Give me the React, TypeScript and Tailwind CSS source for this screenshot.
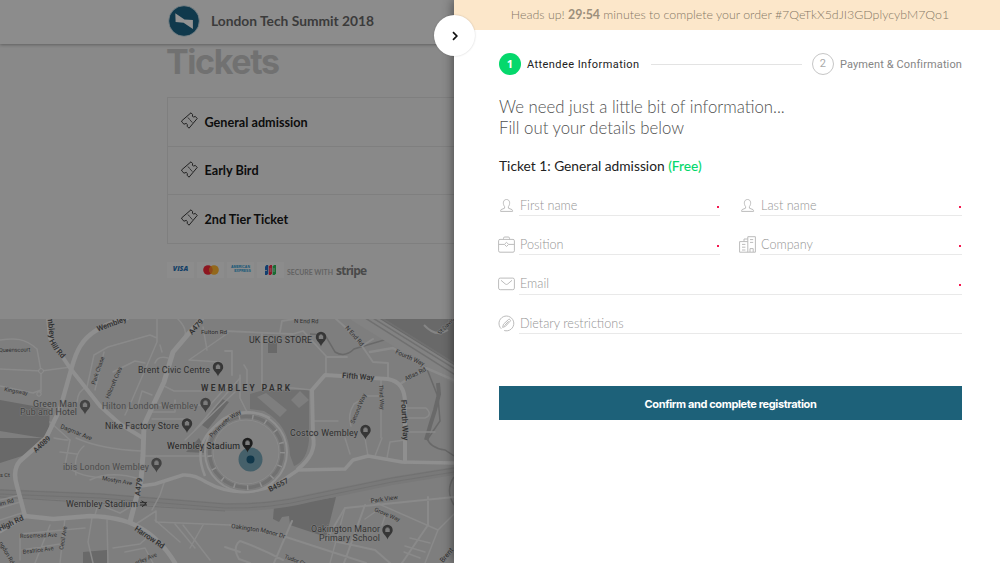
import React from "react";

type P = { d: string; w?: number; c?: string };

const roads: P[] = [
  { d: "M0 340 C15 338 25 338 37 349 L41 371 V392 M0 369 L41 371 L71 367 M0 386 L33 393 L41 390", w: 1.5 },
  { d: "M70 440 L50 422 M77 402 Q78 390 87 387 L94 355 L108 347 L150 335 L157 338 M157 318 V342 L145 370 L132 400 L125 415", w: 1.5 },
  { d: "M113 372 L135 361 L145 363 M104 352 L95 390 M138 405 L142 391 L152 395 M155 363 Q158 355 168 358 M162 352 L160 345", w: 1.5 },
  { d: "M162 385 L174 391 H210 M189 360 L218 340 L228 333 M203 327 L207 350 M177 318 Q187 328 185 335 M189 360 L220 362", w: 1.5 },
  { d: "M157 405 H210 L228 385 M152 419 H190 M175 400 V412 H150 M195 430 L240 378 M185 440 L235 392", w: 1.5 },
  { d: "M280 332 L282 321 L300 318 M225 331 L293 334 L303 331 L326 356 V374 M326 357 H347 M262 334 V388 M225 351 H232 V375", w: 1.8 },
  { d: "M335 318 L345 327 L362 346 L373 362 L388 363 V379 M345 318 L364 318 M362 346 L373 339", w: 2 },
  { d: "M370 352 L393 348 L426 368 L400 384 M426 368 L454 380", w: 2.5 },
  { d: "M381 380 V438 M351 426 Q347 415 354 404 L367 396 H382 M405 408 H426 Q433 415 425 418 L405 418 M405 432 H435 M312 421 H338", w: 1.5 },
  { d: "M240 375 V398 L246 410 L248 413 M244 365 L247 370 V390 M262 388 L293 388 L312 390", w: 1.5 },
  { d: "M345 438 L350 454 M375 456 L382 438 M387 458 L390 442 L405 440 M365 438 L368 456 M405 440 V461", w: 1.5 },
  { d: "M54 438 Q64 440 68 440 M60 452 L77 454 M70 440 L65 465 Q80 479 115 478 M76 438 Q100 449 141 451 M84 446 Q73 455 76 475", w: 1.5 },
  { d: "M143 456 H207 M97 508 L95 515 M105 507 L120 513 L135 504 M152 510 L160 495 L165 480 M90 480 Q110 470 140 479", w: 1.5 },
  { d: "M92 518 L88 542 L93 563 M107 520 L108 563 M65 518 L60 563 M20 534 L85 528 M20 535 V560 M35 563 L50 525 M22 550 L60 544 M113 548 L140 544 L150 535 M136 524 L156 511 V522 L230 525", w: 1.5 },
  { d: "M125 552 L145 548 L153 563 M175 524 L195 548 M183 525 L210 560 M203 525 L190 548 M155 520 L180 542 M0 520 L25 512 M0 500 L20 495 M0 508 L20 502", w: 1.5 },
  { d: "M230 525 L286 537 L366 563 M292 521 L274 563 M326 540 L345 508 L454 497 M428 497 V525 L402 563 M365 505 L344 563 M320 538 L375 550 L390 563 M225 547 L240 552 M283 560 Q260 548 240 541 Q232 547 239 559 L250 563", w: 2 },
  { d: "M345 508 L330 563 M370 500 L438 530 L425 563 M375 512 L365 519 M385 516 L382 525 M438 530 L454 514 M410 538 L430 543 M405 546 L425 552 M404 552 L420 558", w: 1.5 },
];

const majors: P[] = [
  { d: "M48 318 L50 338 L70 368 L100 406 L120 424 L143 438", w: 4 },
  { d: "M127 318 Q92 327 81 345 Q76 352 71 370 L60 409 L46 438 L20 461 Q12 470 17 486 L25 516 L0 531", w: 4.5 },
  { d: "M25 516 L53 519 L90 516 Q120 517 137 526 Q160 538 175 563", w: 4.5 },
  { d: "M202 318 L173 352 L164 382 L144 425 L143 455 L141 480 L130 522", w: 5 },
  { d: "M141 486 L155 484 L183 475 Q194 474 206 482 Q240 501 279 483 L298 470 L345 469 L353 460 L368 456 L402 462 L454 463", w: 3.5 },
  { d: "M298 469 Q317 454 313 436 L312 390 L325 375 L388 379 Q405 382 405 403 V462", w: 4 },
];

function Pin({ x, y, c = "#363636" }: { x: number; y: number; c?: string }) {
  return (
    <g transform={`translate(${x} ${y})`}>
      <path d="M0 8.5 C-1 4.5 -5.2 3 -5.2 -1 A5.2 5.2 0 0 1 5.2 -1 C5.2 3 1 4.5 0 8.5Z" fill={c} />
      <path d="M-2.2 -2.5 H2.2 V1 H-2.2Z M-1.2 -3.6 H1.2 V-2.5 H-1.2Z" fill="#7c7c7c" />
    </g>
  );
}

function T({ x, y, r = 0, s = 7, w = 400, c = "#2e2e2e", a = "start", len, children }: {
  x: number; y: number; r?: number; s?: number; w?: number; c?: string; a?: "start" | "end" | "middle"; len?: number; children: string;
}) {
  return (
    <text transform={`translate(${x} ${y}) rotate(${r})`} fontSize={s} fontWeight={w} fill={c} textAnchor={a}
      textLength={len} stroke="#808080" strokeWidth="1.2" paintOrder="stroke" strokeLinejoin="round">
      {children}
    </text>
  );
}

function CityMap() {
  return (
    <svg width="454" height="245" viewBox="0 318 454 245" className="block font-['Roboto',sans-serif]">
      <rect y="318" width="454" height="245" fill="#7e7e7e" />
      <g fill="#696969">
        <path d="M0 400 L50 409 L49 428 L43 438 L0 431Z M0 438 H42 L25 455 L0 463Z" />
        <path d="M274 507 L336 497 L326 537 L290 525 L289 516 L282 517 L279 522 L273 519Z M83 552 L107 550 V563 H83Z" />
        <path d="M364 318 H454 V376Z M268 343 H277 V353 H268Z" />
        <path d="M250 394 L264 390 H309 V440 Q307 461 294 466 L290 455 Q289 425 264 411 L250 409Z" fill="#707070" />
        <path d="M186 452 L199 438 L207 453Z M202 425 L222 399 L229 402 L208 429Z" />
      </g>
      <g fill="#7e7e7e">
        <path d="M257 397 L266 393 L287 410 L280 417Z M291 400 L300 391 L309 400 L299 408Z" />
      </g>
      <g fill="none" stroke="#696969" strokeWidth="1.5">
        <path d="M310 334 L325 335 L335 352 Q345 358 354 349 L394 337 L418 350 L427 369 L438 397 L440 421 L427 440" />
        <path d="M454 477 Q445 490 454 505 M427 438 Q430 448 445 450 L454 456" />
        <path d="M438 383 L439 394 L435 410 L430 426 L426 440" strokeWidth="4" />
      </g>
      <g fill="none" strokeLinecap="butt">
        <path d="M355 313 L460 378" stroke="#828282" strokeWidth="16" />
        <path d="M368 315 L460 372 M362 316 L460 378 M377 315 L460 367" stroke="#707070" strokeWidth="1.5" />
        <path d="M424 325 Q436 338 448 330" stroke="#858585" strokeWidth="2" />
        <path d="M0 493 L100 497 L225 507 Q270 508 310 498 L392 481 L454 471" stroke="#797979" strokeWidth="8" />
        <path d="M0 490 L100 494 L225 504 Q270 505 310 495 L392 478 L454 468 M0 494 L100 498 L225 508 Q270 509 310 499 L392 482 L454 472 M0 497 L225 511" stroke="#707070" strokeWidth="0.9" />
      </g>
      <g fill="none" stroke="#8a8a8a" strokeLinecap="round" strokeLinejoin="round">
        {roads.map((r, i) => <path key={i} d={r.d} strokeWidth={r.w} />)}
      </g>
      <g fill="none" stroke="#8f8f8f" strokeLinecap="round" strokeLinejoin="round">
        {majors.map((r, i) => <path key={i} d={r.d} strokeWidth={r.w} />)}
      </g>
      <ellipse cx="246" cy="452" rx="41" ry="40" fill="#7e7e7e" stroke="#8f8f8f" strokeWidth="2" />
      <ellipse cx="246" cy="452" rx="36.5" ry="35.5" fill="none" stroke="#717171" strokeWidth="3.5" />
      <ellipse cx="246" cy="452" rx="36.5" ry="35.5" fill="none" stroke="#8f8f8f" strokeWidth="5" strokeDasharray="1.5 12" />
      <ellipse cx="246" cy="452" rx="33" ry="32" fill="#828282" stroke="#8b8b8b" strokeWidth="1" />
      <path d="M205 476 Q190 440 224 420 Q247 406 270 418" fill="none" stroke="#8f8f8f" strokeWidth="2.5" />
      <circle cx="41" cy="371" r="2.4" fill="#7e7e7e" stroke="#8f8f8f" />
      <circle cx="39" cy="394" r="2.2" fill="#7e7e7e" stroke="#8f8f8f" />

      <T x={47.5} y={317} r={84} s={8} w={500}>mbley</T>
      <T x={49} y={341} r={60} s={7.5} w={500}>Hill</T>
      <T x={56} y={352} r={48} s={7.5} w={500}>Rd</T>
      <T x={98} y={331.5} r={-20} s={7.5} w={500}>Wembley</T>
      <T x={192} y={335} r={-48} s={7.5} w={500}>A479</T>
      <T x={201} y={334} s={6.2}>Fulton Rd</T>
      <T x={-1} y={352} s={5.5} r={-1}>Queenscourt</T>
      <T x={4} y={391} r={10} s={5.6}>Kingsway</T>
      <T x={95} y={385} r={-71} s={5.8}>Park Chase</T>
      <T x={109} y={399} r={-67} s={5.8}>Hillcroft Cres</T>
      <T x={60} y={428} r={22} s={6.2}>Dagmar Ave</T>
      <T x={212} y={438} r={-45} s={6.2}>Perimet</T>
      <T x={226} y={423} r={-33} s={6.2}>er Way</T>
      <T x={294} y={323} s={6} r={1}>N End Rd</T>
      <T x={345} y={328} r={49} s={6}>N End Rd</T>
      <T x={395} y={353} r={25} s={6.2}>Fourth Way</T>
      <T x={406} y={381} r={-27} s={6.2}>Atlas Rd</T>
      <T x={440} y={335} r={-46} s={5.8}>St Davids</T>
      <T x={342} y={378} r={4} s={7.7} w={500}>Fifth Way</T>
      <T x={401} y={400} r={87} s={8} w={500}>Fourth Way</T>
      <T x={379} y={385} r={87} s={5.6}>Third Way</T>
      <T x={354} y={424} r={-67} s={5.8}>Second Way</T>

      <T x={249} y={343} s={8.8} len={63}>UK ECIG STORE</T>
      <T x={138} y={373} s={8.8} len={72}>Brent Civic Centre</T>
      <T x={201} y={391.3} s={8.4} w={600} len={89}>WEMBLEY PARK</T>
      <T x={77} y={406.5} s={8.8} c="#404040" a="end" len={44}>Green Man</T>
      <T x={77} y={415} s={8.8} c="#404040" a="end" len={57}>Pub and Hotel</T>
      <T x={102} y={408.5} s={8.8} c="#4c4c4c" len={96}>Hilton London Wembley</T>
      <T x={105} y={429} s={8.8} len={74}>Nike Factory Store</T>
      <T x={290} y={435.5} s={8.8} len={68}>Costco Wembley</T>
      <T x={167} y={449.3} s={8.8} len={73} c="#1e1e1e">Wembley Stadium</T>
      <T x={63} y={469.5} s={8.8} c="#4c4c4c" len={86}>ibis London Wembley</T>
      <T x={66} y={506.5} s={8.8} len={72}>Wembley Stadium</T>
      <T x={380} y={531.5} s={8.8} c="#363636" a="end" len={69}>Oakington Manor</T>
      <T x={380} y={540.5} s={8.8} c="#363636" a="end" len={61}>Primary School</T>

      <T x={36} y={453} r={-43} s={7} w={500}>A4089</T>
      <T x={0} y={477} s={5.6}>s Ct</T>
      <T x={102} y={480} r={10} s={5.8}>Mostyn Ave</T>
      <T x={140} y={496} r={-83} s={7.5} w={500}>A479</T>
      <T x={0} y={506} r={-15} s={5.8}>lm Rd</T>
      <T x={0} y={531} r={-25} s={7.5} w={500}>High Rd</T>
      <T x={20} y={538} r={-2} s={5.8} len={37}>Rosemead Ave</T>
      <T x={23} y={554} r={-7} s={5.8} len={31}>Beatrice Ave</T>
      <T x={63} y={550} r={-80} s={5.8}>Cecil Ave</T>
      <T x={-1} y={543} r={60} s={5.8}>ngdon Rd</T>
      <T x={134} y={530} r={34} s={7.7} w={500} len={34}>Harrow Rd</T>
      <T x={136} y={565} r={-23} s={5.8}>erley Ave</T>
      <T x={270} y={492} r={-27} s={7.3} w={500}>B4557</T>
      <T x={371} y={503} r={-8} s={6.2}>Park View</T>
      <T x={374} y={511} r={23} s={5.8}>Grove Way</T>
      <T x={231} y={528} r={8} s={6.2}>Oakington</T>
      <T x={260} y={531.5} r={16} s={6.2}>Manor Dr</T>
      <T x={284} y={558} r={21} s={5.8}>Tudor Ct</T>
      <T x={443} y={563} r={-50} s={7}>Brent</T>

      <Pin x={321} y={338} />
      <Pin x={218} y={368} />
      <Pin x={85} y={406} c="#424242" />
      <Pin x={205.5} y={404} c="#424242" />
      <Pin x={187} y={424.5} />
      <Pin x={365.5} y={431} />
      <Pin x={156.5} y={464} c="#424242" />
      <Pin x={387.5} y={531} />
      <path d="M140 502.7 H147 M140 505 H147 M141.5 500.8 L146 503.8 L142 506.8" stroke="#2b2b2b" fill="none" strokeWidth="1" />
      <circle cx="250.5" cy="459.5" r="12" fill="#45606a" />
      <circle cx="250.5" cy="459.5" r="4" fill="#10374a" />
      <Pin x={247.5} y={444} c="#1e1e1e" />
      <rect y="318" width="454" height="1" fill="#898989" />
    </svg>
  );
}

function TicketIcon() {
  return (
    <svg width="17" height="17" viewBox="0 0 17 17" className="shrink-0" fill="none" stroke="#1c1c1c" strokeWidth="0.95" strokeLinejoin="round" strokeLinecap="round">
      <path d="M1 8.6 L10 0.8 L11.6 2.6 Q10.9 4.4 12.4 5.1 L14.3 4.4 L16.2 6.5 L8 16.2 L6.2 14.3 Q7 12.2 5.2 11.4 L3 12.2 L1 10.2Z" />
      <path d="M7.3 5.9 L7.9 6.6 M8.8 7.7 L9.5 8.5 M10.4 9.5 L11 10.2" />
    </svg>
  );
}

const iconPaths: Record<string, React.ReactNode> = {
  user: <path d="M6.6 9.6 C4.8 7.5 4.6 2.5 8.5 2.5 S12.2 7.5 10.4 9.6 V11.2 L14 12.6 Q14.6 13 14.6 14.4 H2.6 Q2.6 13 3.1 12.6 L6.6 11.2Z" />,
  bag: (
    <>
      <rect x="0.6" y="3.4" width="15.8" height="12.8" rx="1.4" />
      <path d="M5.5 3.4 V2.3 Q5.5 1 6.8 1 H10.2 Q11.5 1 11.5 2.3 V3.4 M0.6 8.4 H6.2 M10.8 8.4 H16.4 M8.5 6.3 L10.6 8.4 L8.5 10.5 L6.4 8.4Z" />
    </>
  ),
  mail: (
    <>
      <rect x="0.6" y="2.1" width="15.8" height="11.6" rx="1.6" />
      <path d="M3 4.3 L7.3 8 Q8.5 8.9 9.7 8 L14 4.3" />
    </>
  ),
  pencil: (
    <>
      <path d="M3.3 13.8 A7.4 7.4 0 1 1 6.2 15.5" />
      <path d="M4.6 12.4 L5.5 9.2 L10.6 4.4 Q11.3 3.9 12 4.6 Q12.9 5.4 12.2 6.2 L7.4 11.4Z M6.5 10.6 L10.7 6.2" />
    </>
  ),
  building: (
    <path d="M8.8 16.2 V0.7 H16.4 V16.2 H0.6 V5.6 H8.8 M5 5.6 V3 H8.8 M3 8.4 H6.4 M3 11.2 H6.4 M11 3.6 H14.2 M11 6.4 H14.2 M11 16 V12.6 H14.2 V16 M3 14 H6.4" />
  ),
};

function Field({ icon, label, required = true, wide = false }: { icon: string; label: string; required?: boolean; wide?: boolean }) {
  return (
    <label className={wide ? "col-span-2 flex h-[39.3px] items-start" : "flex h-[39.3px] items-start"}>
      <svg width="17" height="17" viewBox="0 0 17 17" fill="none" stroke="#bcbcbc" strokeWidth="1" strokeLinejoin="round" className="mt-[1px] shrink-0">
        {iconPaths[icon]}
      </svg>
      <span className="ml-1 flex h-[20px] flex-1 items-center justify-between border-b border-[#e9e9e9]">
        <span className="pl-[1px] pt-[0.5px] text-[12.65px] font-light leading-[18px] text-[#949494]">{label}</span>
        {required && <span className="mr-[1px] mt-[2px] size-[2px] bg-[#f5174f]" />}
      </span>
    </label>
  );
}

function Cards() {
  return (
    <div className="flex gap-[3px]">
      <span className="flex h-4 w-[27px] items-center justify-center bg-[#8c8c8c] font-['Open_Sans',sans-serif] text-[7px] font-extrabold italic text-[#123f67]">VISA</span>
      <span className="flex h-4 w-[27px] items-center justify-center bg-[#8c8c8c]">
        <svg width="16" height="10" viewBox="0 0 16 10"><circle cx="5" cy="5" r="4.8" fill="#8d1620" /><circle cx="11" cy="5" r="4.8" fill="#93681b" /><path d="M8 1.3 A4.8 4.8 0 0 1 8 8.7 A4.8 4.8 0 0 1 8 1.3" fill="#8f471b" /></svg>
      </span>
      <span className="flex h-4 w-[27px] flex-col items-center justify-center bg-[#8c8c8c] font-['Liberation_Sans',sans-serif] text-[3.5px] font-bold leading-[3.6px] text-[#0f5578]">
        <span>AMERICAN</span><span className="ml-1">EXPRESS</span>
      </span>
      <span className="flex h-4 w-[27px] items-center justify-center bg-[#8c8c8c]">
        <svg width="11" height="10" viewBox="0 0 11 10"><path d="M1.5 0 H3.2 V8.5 L2 10 H0 V1.5Z" fill="#123f70" /><path d="M5.2 0 H7 V8.5 L5.8 10 H3.8 V1.5Z" fill="#8d1829" /><path d="M9 0 H11 V8.5 L9.7 10 H7.6 V1.5Z" fill="#196b32" /><path d="M0 5.5 H2 M4.5 4 H6.5 M4.5 6 H6.5 M8 4 H10 M8 6 H10" stroke="#8c8c8c" strokeWidth="0.7" /></svg>
      </span>
    </div>
  );
}

export default function App() {
  return (
    <main className="relative flex h-[563px] w-[1000px] overflow-hidden bg-white font-['Lato',sans-serif]">
      <section className="flex w-[454px] shrink-0 flex-col overflow-hidden bg-[#898989]">
        <header className="z-10 flex h-11 shrink-0 items-center bg-[#8c8c8c] pl-[168px] shadow-[0_1px_3px_rgba(0,0,0,0.3)]">
          <svg width="32" height="32" viewBox="0 0 32 32" className="-mt-[3px]">
            <circle cx="16" cy="16" r="15.3" fill="#10394c" stroke="#7c8589" strokeWidth="0.8" />
            <path d="M7.3 8.2 L16.5 14.6 L24.9 15 V24 L15.6 17.7 L7.6 17Z" fill="#939393" />
          </svg>
          <span className="ml-[11px] mt-[-1px] whitespace-nowrap text-[13.8px] font-bold text-[#3b3b3b]">London Tech Summit 2018</span>
        </header>
        <h1 className="ml-[166px] mt-[-1px] h-[54px] whitespace-nowrap font-['Inter',sans-serif] text-[34px] font-bold leading-[38px] tracking-[-1.4px] text-[#717171]">Tickets</h1>
        <ul className="ml-[167px] border-l border-t border-[#7f7f7f]">
          {["General admission", "Early Bird", "2nd Tier Ticket"].map((t) => (
            <li key={t} className="flex h-[48.5px] items-center border-b border-[#7f7f7f] pl-[13px]">
              <span className="-mt-[2px] flex"><TicketIcon /></span>
              <span className="ml-[6.5px] mt-[3.4px] text-[12.65px] font-bold text-[#0d0d0d]">{t}</span>
            </li>
          ))}
        </ul>
        <div className="ml-[167px] mt-[18px] flex h-4 shrink-0 items-center">
          <Cards />
          <span className="ml-[3px] mt-[6px] whitespace-nowrap text-[6.9px] font-bold text-[#636363]">SECURE WITH</span>
          <span className="ml-[3px] mt-[2px] font-['Open_Sans',sans-serif] text-[12px] font-bold leading-4 tracking-[-0.8px] text-[#4a4a4a]">stripe</span>
        </div>
        <div className="mt-auto h-[245px] shrink-0"><CityMap /></div>
      </section>

      <section className="relative z-20 flex flex-1 flex-col bg-white shadow-[-1px_0_10px_rgba(0,0,0,0.45)]">
        <div className="flex h-[30px] items-center justify-center whitespace-nowrap bg-[#fce7ca] pl-[6px] text-[12.4px] font-light text-[#857866]">
          <p>Heads up! <b className="font-bold text-[#9c8f7c]">29:54</b> minutes to complete your order #7QeTkX5dJI3GDplycybM7Qo1</p>
        </div>
        <div className="flex flex-col pl-[45px] pr-[38px]">
          <div className="mt-[22px] flex h-6 items-center whitespace-nowrap font-['Roboto',sans-serif] text-[11px]">
            <span className="flex size-[22px] items-center justify-center rounded-full bg-[#05d86c] font-['Noto_Sans',sans-serif] font-bold text-white">1</span>
            <span className="ml-[6px] mt-[2px] tracking-[0.43px] text-[#222222]">Attendee Information</span>
            <span className="ml-[11px] mr-[10px] h-px flex-1 bg-[#e3e3e3]" />
            <span className="flex size-[22px] items-center justify-center rounded-full border border-[#c6c6c6] text-[#aaaaaa]">2</span>
            <span className="ml-[6px] mt-[2px] tracking-[0.12px] text-[#858585]">Payment &amp; Confirmation</span>
          </div>
          <h2 className="mt-[20px] text-[16.75px] font-light leading-[21px] text-[#505050]">We need just a little bit of information...<br />Fill out your details below</h2>
          <h3 className="mt-[18px] text-[13.75px] leading-[20px] text-[#222222]">Ticket 1: General admission <span className="font-medium text-[#05d86c]">(Free)</span></h3>
          <form className="-ml-[1px] mt-[20px] grid grid-cols-[222px_223px] gap-x-[19px]">
            <Field icon="user" label="First name" />
            <Field icon="user" label="Last name" />
            <Field icon="bag" label="Position" />
            <Field icon="building" label="Company" />
            <Field icon="mail" label="Email" wide />
            <Field icon="pencil" label="Dietary restrictions" required={false} wide />
          </form>
          <button className="mt-[33px] h-[34px] bg-[#1d6179] pt-[2px] font-['Inter',sans-serif] text-[11px] font-bold tracking-[-0.37px] text-white">Confirm and complete registration</button>
        </div>
        <button aria-label="Close panel" className="absolute -left-[20px] top-[15px] flex size-[41px] items-center justify-center rounded-full bg-white shadow-[0_0_2px_rgba(0,0,0,0.2)]">
          <svg width="8" height="10" viewBox="0 0 8 10" fill="none" stroke="#111" strokeWidth="1.7"><path d="M2 1.2 L5.8 5 L2 8.8" /></svg>
        </button>
      </section>
    </main>
  );
}
